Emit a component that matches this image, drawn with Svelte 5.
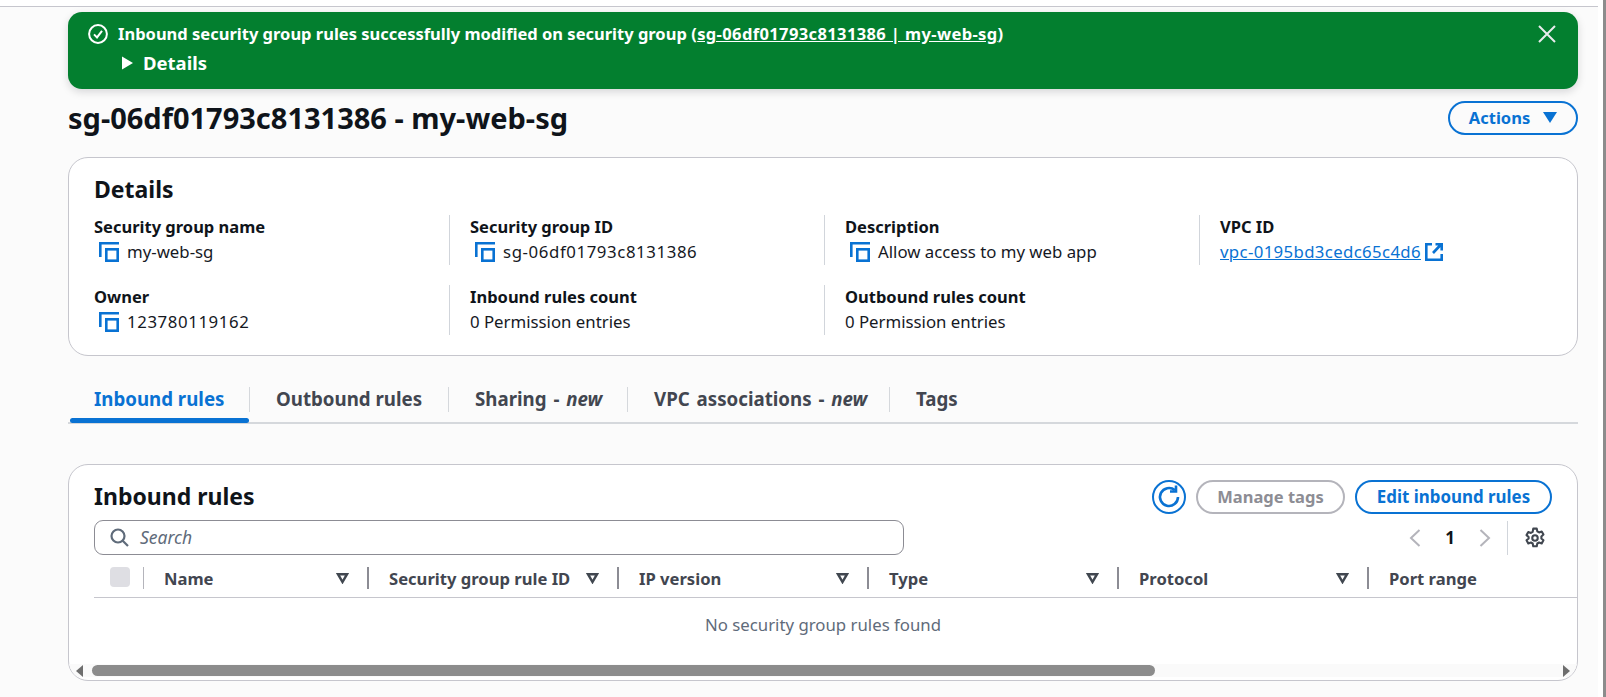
<script>
  const details = [
    [
      { label: 'Security group name', value: 'my-web-sg', copy: true },
      { label: 'Security group ID', value: 'sg-06df01793c8131386', copy: true, num: true },
      { label: 'Description', value: 'Allow access to my web app', copy: true },
      { label: 'VPC ID', value: 'vpc-0195bd3cedc65c4d6', link: true }
    ],
    [
      { label: 'Owner', value: '123780119162', copy: true, num: true },
      { label: 'Inbound rules count', value: '0 Permission entries' },
      { label: 'Outbound rules count', value: '0 Permission entries' }
    ]
  ];
  const tabs = [
    { name: 'Inbound rules', w: 180, active: true },
    { name: 'Outbound rules', w: 199 },
    { name: 'Sharing - ', em: 'new', w: 179 },
    { name: 'VPC associations - ', em: 'new', w: 262 },
    { name: 'Tags', w: 100, last: true }
  ];
  const cols = [
    { name: 'Name', w: 225 },
    { name: 'Security group rule ID', w: 250 },
    { name: 'IP version', w: 250 },
    { name: 'Type', w: 250 },
    { name: 'Protocol', w: 250 }
  ];
</script>

<div class="root">
  <div class="main">
    <div class="topline"></div>
    <div class="banner">
      <div class="banner-row">
        <svg class="ok" viewBox="0 0 20 20" width="20" height="20"><circle cx="10" cy="10" r="8.9" fill="none" stroke="#fff" stroke-width="2"/><path d="M6 10.4l3 3 5-6.6" fill="none" stroke="#fff" stroke-width="2"/></svg>
        <span class="banner-text">Inbound security group rules successfully modified on security group <span class="paren">(<u>sg-06df01793c8131386 | my-web-sg</u>)</span></span>
        <svg class="close" viewBox="0 0 18 18" width="18" height="18"><path d="M1 1l16 16M17 1L1 17" fill="none" stroke="#e9ebed" stroke-width="2"/></svg>
      </div>
      <div class="banner-details">
        <svg viewBox="0 0 11 14" width="11" height="14"><path d="M0 0.500l11 6.500-11 6.500z" fill="#fff"/></svg>
        <span>Details</span>
      </div>
    </div>

    <div class="titlebar">
      <h1>sg-06df01793c8131386 - my-web-sg</h1>
      <button class="btn actions">Actions <svg viewBox="0 0 14 11" width="14" height="11"><path d="M0 0h14L7 11z" fill="#0972d3"/></svg></button>
    </div>

    <section class="card details">
      <h2>Details</h2>
      {#each details as row}
        <div class="grid-row">
          {#each row as item, i}
            <div class="cell" class:first={i === 0}>
              <div class="label">{item.label}</div>
              <div class="value" class:hascopy={item.copy} class:num={item.num}>
                {#if item.copy}
                  <svg class="copy" viewBox="0 0 20 20" width="20" height="20"><path d="M1.300 15V1.300H20" fill="none" stroke="#0972d3" stroke-width="2.600"/><rect x="7.300" y="7.300" width="11.400" height="11.400" fill="none" stroke="#0972d3" stroke-width="2.600"/></svg>
                {/if}
                {#if item.link}
                  <a href="#top">{item.value} </a>
                  <svg class="ext" viewBox="0 0 18 18" width="18" height="18"><path d="M7 1.300H1.300v15.400h15.400V11" fill="none" stroke="#0972d3" stroke-width="2.600"/><path d="M8 10l7.500-8M10.500 1.300h6.200v6.200" fill="none" stroke="#0972d3" stroke-width="2.600"/></svg>
                {:else}
                  <span>{item.value}</span>
                {/if}
              </div>
            </div>
          {/each}
        </div>
      {/each}
    </section>

    <nav class="tabs">
      {#each tabs as t}
        <div class="tab" class:active={t.active} class:last={t.last} class:hasnew={t.em} style="width:{t.w}px">
          <span>{t.name}{#if t.em}<em>{t.em}</em>{/if}</span>
        </div>
      {/each}
    </nav>

    <section class="card rules">
      <div class="rules-head">
        <h2>Inbound rules</h2>
        <div class="tools">
          <button class="refresh" aria-label="Refresh">
            <svg viewBox="0 0 24 24" width="24" height="24"><path d="M21 12a9 9 0 1 1-3.200-6.900" fill="none" stroke="#0972d3" stroke-width="2.600"/><path d="M19 0.500v6h-6" fill="none" stroke="#0972d3" stroke-width="2.600"/></svg>
          </button>
          <button class="btn disabled">Manage tags</button>
          <button class="btn edit">Edit inbound rules</button>
        </div>
      </div>
      <div class="filter-row">
        <div class="search">
          <svg viewBox="0 0 19 19" width="19" height="19"><circle cx="8" cy="8" r="6.500" fill="none" stroke="#5f6b7a" stroke-width="2.200"/><path d="M12.500 12.500l5.500 5.500" stroke="#5f6b7a" stroke-width="2.200"/></svg>
          <span>Search</span>
        </div>
        <div class="pager">
          <svg class="chev" viewBox="0 0 12 20" width="12" height="20"><path d="M10.500 2L2 10l8.500 8" fill="none" stroke="#b4b4bb" stroke-width="2"/></svg>
          <span class="page">1</span>
          <svg class="chev" viewBox="0 0 12 20" width="12" height="20"><path d="M1.500 2L10 10l-8.500 8" fill="none" stroke="#b4b4bb" stroke-width="2"/></svg>
          <div class="pager-div"></div>
          <svg class="gear" viewBox="0 0 20 20" width="22" height="22"><path d="M8.400 1.500h3.200l.5 2.500 1.600.9 2.400-.8 1.600 2.800-1.900 1.700v1.800l1.900 1.700-1.600 2.800-2.400-.8-1.600.9-.5 2.500H8.400l-.5-2.500-1.600-.9-2.400.8-1.600-2.800 1.900-1.700V9.100L2.300 7.400l1.600-2.800 2.400.8 1.600-.9z" fill="none" stroke="#414750" stroke-width="1.900" stroke-linejoin="round"/><circle cx="10" cy="10" r="2.500" fill="none" stroke="#414750" stroke-width="1.900"/></svg>
        </div>
      </div>
      <div class="thead">
        <div class="check-cell"><span class="check"></span></div>
        {#each cols as c}
          <div class="th" style="width:{c.w}px">
            <span>{c.name}</span>
            <svg class="sort" viewBox="0 0 13 11" width="13" height="11"><path d="M2 1.200h9L6.500 9z" fill="none" stroke="#414750" stroke-width="2.400"/></svg>
          </div>
        {/each}
        <div class="th port"><span>Port range</span></div>
      </div>
      <div class="empty">No security group rules found</div>
      <div class="hscroll">
        <svg viewBox="0 0 7 12" width="7" height="12" class="arr"><path d="M7 0v12L0 6z" fill="#6e6e6e"/></svg>
        <div class="thumb"></div>
        <svg viewBox="0 0 7 12" width="7" height="12" class="arr"><path d="M0 0v12l7-6z" fill="#6e6e6e"/></svg>
      </div>
    </section>
  </div>
  <div class="vscroll"></div>
</div>

<style>
  :global(body) {
    margin: 0;
    background: #fff;
    font-family: "Noto Sans", "Liberation Sans", sans-serif;
    color: #16191f;
  }
  .root {
    display: flex;
    justify-content: space-between;
    height: 697px;
    overflow: hidden;
    background: #fff;
  }
  .main {
    width: 1598px;
    height: 697px;
    box-sizing: border-box;
    padding-top: 6px;
    background: #fbfbfb;
    background-clip: content-box;
  }
  .main > :not(.topline) {
    margin-left: 68px;
    margin-right: 20px;
  }
  .topline {
    height: 1px;
    background: #c6c6cd;
  }
  .vscroll {
    width: 3px;
    height: 697px;
    background: #8c8c8c;
  }
  .banner {
    margin-top: 5px;
    height: 77px;
    box-sizing: border-box;
    background: #037f2f;
    border-radius: 14px;
    box-shadow: 0 3px 8px rgba(0, 7, 22, 0.15);
    padding: 12px 20px 0 20px;
    color: #fff;
    font-weight: 700;
    font-size: 16.500px;
    line-height: 20px;
  }
  .banner-row {
    display: flex;
    align-items: center;
    height: 20px;
  }
  .ok { margin-right: 10px; flex: none; }
  .banner-text { flex: 1; }
  .paren { letter-spacing: 0.380px; }
  .close { flex: none; margin-right: 2px; }
  .banner-details {
    display: flex;
    align-items: center;
    gap: 10px;
    margin: 9px 0 0 34px;
    font-size: 18.500px;
    height: 20px;
  }
  .titlebar {
    display: flex;
    justify-content: space-between;
    align-items: center;
    height: 34px;
    margin-top: 12px;
  }
  h1 {
    margin: 0;
    font-size: 29px;
    font-weight: 700;
    line-height: 34px;
    color: #0f141a;
  }
  .btn {
    box-sizing: border-box;
    height: 34px;
    border: 2px solid #0972d3;
    border-radius: 17px;
    background: #fff;
    color: #0972d3;
    font: 700 16.500px "Noto Sans", sans-serif;
    padding: 0 0 2px;
    display: inline-flex;
    align-items: center;
    justify-content: center;
  }
  .actions { width: 130px; gap: 13px; background: transparent; }
  .card {
    background: #fff;
    border: 1px solid #c6c6cd;
    border-radius: 20px;
    box-sizing: border-box;
  }
  .details {
    margin-top: 22px;
    height: 199px;
    padding: 16px 25px 0;
  }
  h2 {
    margin: 0;
    font-size: 23px;
    font-weight: 700;
    line-height: 30px;
    color: #0f141a;
  }
  .grid-row {
    display: flex;
    margin-top: 20px;
    height: 50px;
  }
  .details h2 + .grid-row { margin-top: 11px; }
  .cell {
    flex: none;
    width: 375px;
    box-sizing: border-box;
    padding-left: 20px;
    border-left: 1px solid #d1d5db;
    font-size: 16.800px;
    white-space: nowrap;
  }
  .cell.first {
    width: 355px;
    padding-left: 0;
    border-left: none;
  }
  .label {
    font-weight: 700;
    font-size: 16.500px;
    line-height: 24px;
    color: #0f141a;
  }
  .value {
    line-height: 26px;
    display: flex;
    align-items: center;
    color: #16191f;
  }
  .value.num span { letter-spacing: 0.600px; }
  .hascopy .copy { margin: 0 8px 0 5px; flex: none; }
  a { color: #0972d3; white-space: pre; letter-spacing: 0.350px; }
  .ext { margin-left: 4px; flex: none; }
  .tabs {
    display: flex;
    margin-top: 31px;
    height: 35px;
    border-bottom: 2px solid #d5d8dc;
    font-size: 18.700px;
    font-weight: 700;
    color: #424650;
    padding-left: 2px;
  }
  .tab {
    position: relative;
    box-sizing: border-box;
    padding-left: 26px;
    line-height: 24px;
    border-right: 1px solid #d5d8dc;
    height: 25px;
    white-space: nowrap;
  }
  .tab.hasnew { word-spacing: 2px; }
  .tab.active { color: #0972d3; padding-left: 24px; }
  .tab.last { border-right: none; }
  .tab.active::after {
    content: "";
    position: absolute;
    left: 0;
    right: 0;
    top: 31px;
    height: 5px;
    border-radius: 3px;
    background: #0972d3;
  }
  .tab em { font-style: italic; }
  .rules {
    margin-top: 40px;
    height: 217px;
    overflow: hidden;
    position: relative;
  }
  .rules-head {
    display: flex;
    justify-content: space-between;
    align-items: center;
    padding: 15px 25px 0 25px;
    height: 34px;
  }
  .rules-head h2 { margin-top: -2px; }
  .tools {
    display: flex;
    align-items: center;
    gap: 10px;
  }
  .refresh {
    width: 34px;
    height: 34px;
    box-sizing: border-box;
    border: 2px solid #0972d3;
    border-radius: 50%;
    background: #fff;
    padding: 0;
    display: flex;
    align-items: center;
    justify-content: center;
  }
  .disabled { width: 149px; border-color: #b4b4bb; color: #8d8d94; }
  .edit { width: 197px; font-size: 16.900px; }
  .filter-row {
    display: flex;
    justify-content: space-between;
    align-items: center;
    padding: 6px 25px 0;
    height: 35px;
  }
  .search {
    width: 810px;
    height: 35px;
    box-sizing: border-box;
    border: 1px solid #8c8c94;
    border-radius: 9px;
    display: flex;
    align-items: center;
    gap: 11px;
    padding: 0 0 2px 15px;
    font-size: 17.500px;
    font-style: italic;
    color: #5f6b7a;
  }
  .search svg { margin-top: 2px; }
  .pager {
    display: flex;
    align-items: center;
    height: 35px;
    margin-right: 6px;
  }
  .chev { flex: none; }
  .page {
    width: 58px;
    text-align: center;
    font-weight: 700;
    font-size: 17px;
    color: #0f141a;
  }
  .pager-div {
    width: 1px;
    height: 34px;
    background: #d1d5db;
    margin: 0 16px 0 16px;
  }
  .thead {
    display: flex;
    align-items: flex-start;
    margin: 11px 0 0 25px;
    height: 30px;
    padding-top: 1px;
    border-bottom: 1px solid #c6c6cd;
    font-size: 16.600px;
    font-weight: 700;
    color: #424650;
  }
  .check-cell {
    width: 50px;
    height: 22px;
    box-sizing: border-box;
    padding-left: 16px;
    border-right: 1px solid #b4b4bb;
    flex: none;
  }
  .check {
    display: block;
    width: 20px;
    height: 20px;
    border-radius: 4px;
    background: #dedee3;
  }
  .th {
    display: flex;
    justify-content: space-between;
    align-items: center;
    box-sizing: border-box;
    height: 22px;
    padding: 0 18px 0 20px;
    border-right: 2px solid #8c8c94;
    flex: none;
    white-space: nowrap;
  }
  .th.port { border-right: none; }
  .empty {
    text-align: center;
    font-size: 16.800px;
    color: #5f6b7a;
    height: 66px;
    line-height: 53px;
  }
  .hscroll {
    position: absolute;
    left: 0;
    right: 0;
    bottom: 3px;
    height: 13px;
    background: #fafafa;
    display: flex;
    align-items: center;
    padding: 0 7px;
    gap: 9px;
  }
  .arr { flex: none; }
  .thumb {
    width: 1063px;
    height: 11px;
    border-radius: 6px;
    background: #8c8c8c;
    margin-right: auto;
  }
</style>
